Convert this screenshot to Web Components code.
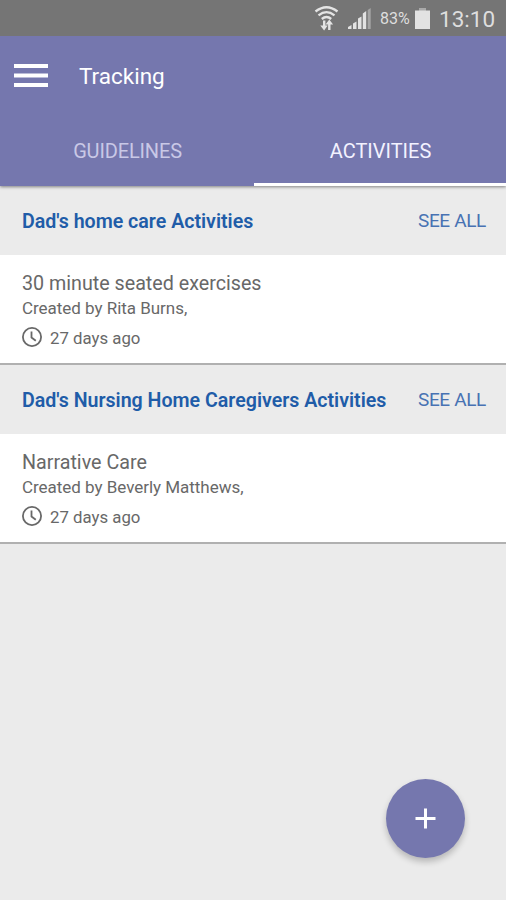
<!DOCTYPE html>
<html lang="en">
<head>
<meta charset="utf-8">
<title>Tracking</title>
<style>
  body { margin: 0; background: #ebebeb; font-family: Roboto, "Liberation Sans", sans-serif; }
</style>
</head>
<body>
<tracking-app></tracking-app>
<script>
const define = (name, html) => {
  const template = document.createElement('template');
  template.innerHTML = html;
  customElements.define(name, class extends HTMLElement {
    constructor() {
      super();
      this.attachShadow({ mode: 'open' }).append(template.content.cloneNode(true));
    }
  });
};

define('status-bar', `
<style>
  :host { display: flex; height: 36px; background: #757575; color: #dedede; align-items: center; justify-content: flex-end; padding-right: 11px; box-sizing: border-box; }
  svg { display: block; flex: none; }
  .wifi { margin-right: 8px; }
  .signal { margin-right: 9px; }
  .pct { font-size: 16px; line-height: 36px; width: 31px; white-space: nowrap; margin-right: 4px; padding-top: 1px; }
  .battery { margin-right: 9px; }
  .time { font-size: 22.500px; line-height: 36px; width: 56px; white-space: nowrap; padding-top: 1px; }
</style>
<svg class="wifi" width="26" height="26" viewBox="0 0 26 26" fill="none" stroke="#e4e4e4" stroke-width="2.300">
  <path d="M2.500 6.500Q13.500 -2 24.500 6.500M5.500 10.300Q13.500 4 21.500 10.300M8.800 14Q13.500 10 18.200 14"/>
  <path d="M11.200 15.500v7M16.300 25v-7" stroke-width="2.400"/>
  <path d="M7.300 20.500h7.400l-3.600 5zM12.500 19.500l3.800-5 3.800 5z" fill="#e4e4e4" stroke="none"/>
</svg>
<svg class="signal" width="24" height="24" viewBox="0 0 24 24" fill="#e2e2e2">
  <path d="M1 21l3.500-2v4H1zM6 17.500l3.500-2V23H6zM11 12.500l3.500-2V23H11zM15.800 7.500l3.400-2.500V23h-3.400z"/>
  <path d="M20.700 4l3-2v21h-3z" fill="#a5a5a5"/>
</svg>
<span class="pct">83%</span>
<svg class="battery" width="15" height="22" viewBox="0 0 15 22"><path d="M4 1h7v3H4z" fill="#a9a9a9"/><path d="M0 3.500h15V22H0z" fill="#e2e2e2"/></svg>
<span class="time">13:10</span>`);

define('app-bar', `
<style>
  :host { display: flex; height: 80px; align-items: center; padding-left: 14px; color: #fff; background: #7577ae; box-sizing: border-box; }
  svg { display: block; margin: -1px 31px 0 0; }
  .title { font-size: 22.500px; line-height: 30px; margin-top: -1px; }
</style>
<svg width="34" height="25" viewBox="0 0 34 25" fill="#fff"><path d="M0 1h34v4H0zM0 10.500h34v4H0zM0 20h34v4H0z"/></svg>
<span class="title"><slot></slot></span>`);

define('tab-strip', `
<style>
  :host { display: grid; grid-template-columns: 254px 1fr; height: 70px; background: #7577ae; box-shadow: 0 1px 3px rgba(0,0,0,.45); position: relative; clip-path: inset(0 0 -6px 0); }
</style>
<slot></slot>`);

define('tab-item', `
<style>
  :host { display: flex; align-items: center; justify-content: center; color: #c9c8e6; font-size: 20px; letter-spacing: -.15px; border-bottom: 3px solid transparent; white-space: nowrap; }
  :host([selected]) { color: #f3f2ff; border-bottom-color: #fff; letter-spacing: 0; }
  span { display: block; line-height: 24px; padding: 3px 0 0 1px; }
</style>
<span><slot></slot></span>`);

define('activity-group', `
<style>
  :host { display: block; }
  header { display: flex; height: 69px; box-sizing: border-box; justify-content: space-between; align-items: center; padding: 3px 20px 0 22px; white-space: nowrap; }
  h2 { margin: 0; font-size: 19.600px; font-weight: 600; line-height: 24px; color: #205ca8; }
  .all { font-size: 19px; letter-spacing: -.35px; line-height: 24px; color: #4872b3; margin-top: -2px; }
</style>
<header><h2><slot name="heading"></slot></h2><span class="all">SEE ALL</span></header>
<slot></slot>`);

define('activity-card', `
<style>
  :host { display: flex; flex-direction: column; box-sizing: border-box; height: 110px; padding: 16px 22px 0; background: #fff; border-bottom: 2px solid #b0b0b0; color: #686868; white-space: nowrap; }
  .name { font-size: 19.700px; line-height: 26px; }
  .by { font-size: 17px; line-height: 24px; letter-spacing: -.03px; margin-top: -1px; }
  .when { display: flex; align-items: center; gap: 8px; margin-top: 6px; font-size: 16.800px; line-height: 24px; }
  svg { display: block; margin-top: -3px; }
</style>
<div class="name"><slot name="name"></slot></div>
<div class="by"><slot name="by"></slot></div>
<div class="when">
  <svg width="20" height="22" viewBox="0 0 20 22" fill="none" stroke="#686868" stroke-width="1.800"><circle cx="10" cy="11" r="9.100"/><path d="M9.500 5.500v6l4.300 3.300"/></svg>
  <span><slot name="when"></slot></span>
</div>`);

define('add-button', `
<style>
  :host { position: fixed; left: 386px; top: 779px; width: 79px; height: 79px; border-radius: 50%; background: #7577ae; box-shadow: 0 4px 6px rgba(0,0,0,.22); display: grid; place-items: center; }
  svg { display: block; }
</style>
<svg width="21" height="21" viewBox="0 0 21 21" fill="none" stroke="#fff" stroke-width="3"><path d="M10.500 .5v20M.5 10.500h20"/></svg>`);

define('tracking-app', `
<style>
  :host { display: block; min-height: 900px; background: #ebebeb; }
</style>
<status-bar></status-bar>
<app-bar>Tracking</app-bar>
<tab-strip><tab-item>GUIDELINES</tab-item><tab-item selected>ACTIVITIES</tab-item></tab-strip>
<activity-group>
  <span slot="heading">Dad's home care Activities</span>
  <activity-card><span slot="name">30 minute seated exercises</span><span slot="by">Created by Rita Burns,</span><span slot="when">27 days ago</span></activity-card>
</activity-group>
<activity-group>
  <span slot="heading">Dad's Nursing Home Caregivers Activities</span>
  <activity-card><span slot="name">Narrative Care</span><span slot="by">Created by Beverly Matthews,</span><span slot="when">27 days ago</span></activity-card>
</activity-group>
<add-button></add-button>`);
</script>
</body>
</html>
